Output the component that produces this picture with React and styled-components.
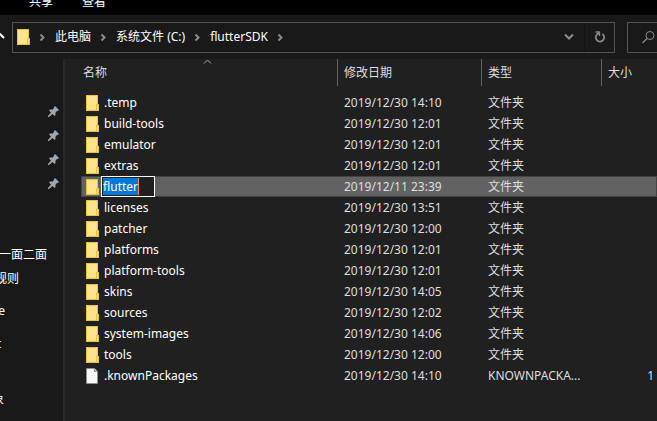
import React, { useEffect, useRef } from "react";
import styled, { createGlobalStyle } from "styled-components";

const Global = createGlobalStyle`
  * { box-sizing: border-box; }
  html, body { margin: 0; background: #202020; }
  body, button, input { font: 12px/16px "Noto Sans", "Noto Sans CJK SC", sans-serif; color: #fff; }
  button { background: none; border: 0; padding: 0; }
`;

const Window = styled.div`
  display: flex;
  flex-direction: column;
  min-height: 100vh;
  overflow: hidden;
`;
const Tabs = styled.nav`
  display: flex;
  align-items: flex-end;
  gap: 29px;
  height: 15px;
  padding: 0 0 5px 29px;
  background: #000;
  overflow: hidden;
`;
const Tab = styled.button`
  flex: none;
  white-space: nowrap;
`;
const Toolbar = styled.div`
  display: flex;
  align-items: center;
  height: 44px;
  background: #191919;
`;
const UpButton = styled.button`
  display: flex;
  width: 12px;
  flex: none;
`;
const AddressBar = styled.div`
  display: flex;
  align-items: center;
  flex: 1;
  min-width: 0;
  height: 31px;
  border: 1px solid #535353;
  padding-left: 4px;
`;
const Crumbs = styled.div`
  display: flex;
  align-items: center;
  flex: 1;
`;
const Crumb = styled.button`
  white-space: nowrap;
`;
const CrumbArrow = styled.svg`
  width: 25px;
  height: 11px;
  flex: none;
  fill: none;
  stroke: #8b8b8b;
  stroke-width: 2;
`;
const BarButton = styled.button`
  display: grid;
  place-items: center;
  width: 30px;
  height: 29px;
  border-left: ${(p) => (p.$divided ? "1px solid #141414" : "0")};
`;
const SearchBox = styled.button`
  display: flex;
  align-items: center;
  width: 30px;
  height: 31px;
  margin-left: 12px;
  padding-left: 14px;
  border: 1px solid #535353;
  border-right: 0;
`;
const Body = styled.div`
  display: flex;
  flex: 1;
`;
const Sidebar = styled.aside`
  display: flex;
  flex-direction: column;
  flex: none;
  width: 65px;
  padding-top: 40px;
  background: #191919;
  border-right: 2px solid #2a2a2a;
  overflow: hidden;
`;
const PinItem = styled.button`
  display: flex;
  align-items: center;
  justify-content: flex-end;
  height: 24px;
  padding-right: 4px;
`;
const TreeItem = styled.button`
  display: flex;
  align-items: center;
  justify-content: flex-end;
  height: 24px;
  margin-top: ${(p) => p.$gap}px;
  padding-right: ${(p) => p.$end}px;
  white-space: nowrap;
`;
const FileTable = styled.table`
  display: block;
  flex: 1;
  min-width: 0;
`;
const TableHead = styled.thead`
  display: block;
`;
const TableBody = styled.tbody`
  display: block;
  padding: 6px 0 0 16px;
`;
const HeadRow = styled.tr`
  display: grid;
  grid-template-columns: 273px 144px 120px minmax(0, 1fr);
  height: 27px;
`;
const HeadCell = styled.th`
  position: relative;
  display: flex;
  align-items: center;
  padding: 0 0 0 ${(p) => (p.$first ? 18 : 6)}px;
  border-right: ${(p) => (p.$last ? "0" : "1px solid #636363")};
  color: #dedede;
  font-weight: 400;
`;
const SortMark = styled.svg`
  position: absolute;
  top: 0;
  left: 138px;
  width: 9px;
  height: 5px;
  fill: none;
  stroke: #a8a8a8;
`;
const Row = styled.tr`
  display: grid;
  grid-template-columns: 257px 144px 120px minmax(0, 1fr);
  align-items: center;
  height: 21px;
  background: ${(p) => (p.$selected ? "#626262" : "transparent")};
  box-shadow: ${(p) => (p.$selected ? "inset 0 0 0 1px #434343" : "none")};
`;
const NameCell = styled.td`
  display: flex;
  align-items: center;
  gap: ${(p) => (p.$editing ? 2 : 5)}px;
  padding: 0 0 0 5px;
  white-space: nowrap;
`;
const InfoCell = styled.td`
  padding: 0 14px 0 6px;
  color: #dedede;
  white-space: nowrap;
`;
const SizeCell = styled(InfoCell)`
  padding: 0 3px 0 0;
  text-align: right;
`;
const RenameBox = styled.span`
  display: flex;
  align-items: center;
  width: 54px;
  height: 21px;
  padding-left: 1px;
  border: 1px solid #fff;
  background: #202020;
`;
const RenameInput = styled.input`
  field-sizing: content;
  height: 17px;
  padding: 0;
  border: 0;
  outline: 0;
  background: #0078d7;
  &::selection { background: #0078d7; color: #fff; }
`;
const Caret = styled.span`
  width: 1px;
  height: 17px;
  background: #ff8728;
`;
const Icon = styled.svg`
  display: block;
  flex: none;
`;

const FolderIcon = () => (
  <Icon width="13" height="16" viewBox="0 0 13 16">
    <path d="M0 0h12v9h1v7H0z" fill="#e9c13f" />
    <path d="M1 1h10v8h-1v6H1z" fill="#ffe48a" />
    <path d="M11 10h1v5h-1z" fill="#ffe17a" />
  </Icon>
);
const FileIcon = () => (
  <Icon width="13" height="16" viewBox="0 0 13 16">
    <path d="M.5.5h8l3 3v12H.5z" fill="#f7f8f9" stroke="#8d8d8d" />
    <path d="M8.500.5v3h3" fill="#d5d5d5" stroke="#8d8d8d" />
  </Icon>
);
const PinIcon = () => (
  <Icon width="11" height="11" viewBox="0 0 11 11">
    <path d="M7 0l4 4-1 1H9L7.500 6.500V9L6.500 10 4.500 8 1 11H0V10L3 6.500 1 4.500 2 3.500h2.500L6 2V1z" fill="#9ba6ae" />
  </Icon>
);
const Arrow = () => (
  <CrumbArrow viewBox="0 0 25 11">
    <path d="M10.500 2.500l3 3-3 3" />
  </CrumbArrow>
);

const crumbs = ["此电脑", "系统文件 (C:)", "flutterSDK"];
const tree = [
  { text: "一面二面", gap: 48, end: 16 },
  { text: "规则", gap: 0, end: 44 },
  { text: "e", gap: 8, end: 58 },
  { text: "t", gap: 9, end: 62 },
  { text: "象", gap: 32, end: 59 },
];
const files = [
  [".temp", "2019/12/30 14:10"],
  ["build-tools", "2019/12/30 12:01"],
  ["emulator", "2019/12/30 12:01"],
  ["extras", "2019/12/30 12:01"],
  ["flutter", "2019/12/11 23:39"],
  ["licenses", "2019/12/30 13:51"],
  ["patcher", "2019/12/30 12:00"],
  ["platforms", "2019/12/30 12:01"],
  ["platform-tools", "2019/12/30 12:01"],
  ["skins", "2019/12/30 14:05"],
  ["sources", "2019/12/30 12:02"],
  ["system-images", "2019/12/30 14:06"],
  ["tools", "2019/12/30 12:00"],
  [".knownPackages", "2019/12/30 14:10", "KNOWNPACKA...", "1"],
];

function RenameField({ name }) {
  const ref = useRef(null);
  useEffect(() => {
    ref.current.focus();
    ref.current.select();
  }, []);
  return (
    <RenameBox>
      <RenameInput ref={ref} defaultValue={name} aria-label="重命名" />
      <Caret />
    </RenameBox>
  );
}

export default function App() {
  return (
    <Window>
      <Global />
      <Tabs>
        <Tab>共享</Tab>
        <Tab>查看</Tab>
      </Tabs>
      <Toolbar>
        <UpButton aria-label="向上">
          <Icon width="6" height="10" viewBox="0 0 6 10">
            <path d="M-1 1L4 6" fill="none" stroke="#fff" strokeWidth="2" />
          </Icon>
        </UpButton>
        <AddressBar>
          <FolderIcon />
          <Crumbs>
            <Arrow />
            {crumbs.map((c) => (
              <React.Fragment key={c}>
                <Crumb>{c}</Crumb>
                <Arrow />
              </React.Fragment>
            ))}
          </Crumbs>
          <BarButton aria-label="历史">
            <Icon width="10" height="8" viewBox="0 0 10 8">
              <path d="M1 1.500l4 4 4-4" fill="none" stroke="#8b8b8b" strokeWidth="2" />
            </Icon>
          </BarButton>
          <BarButton $divided aria-label="刷新">
            <Icon width="12" height="12" viewBox="0 0 12 12">
              <path d="M8.500 3A4.200 4.200 0 1 1 3.200 3.200L5 2" fill="none" stroke="#8b8b8b" strokeWidth="1.700" />
              <path d="M1.500 1h4v4" fill="none" stroke="#8b8b8b" strokeWidth="1.300" />
            </Icon>
          </BarButton>
        </AddressBar>
        <SearchBox aria-label="搜索">
          <Icon width="13" height="13" viewBox="0 0 13 13">
            <circle cx="8" cy="4.500" r="4" fill="none" stroke="#8b8b8b" />
            <path d="M5 7.500L.5 12" stroke="#8b8b8b" strokeWidth="1.300" />
          </Icon>
        </SearchBox>
      </Toolbar>
      <Body>
        <Sidebar>
          {[1, 2, 3, 4].map((n) => (
            <PinItem key={n} aria-label="已固定">
              <PinIcon />
            </PinItem>
          ))}
          {tree.map((t) => (
            <TreeItem key={t.text} $gap={t.gap} $end={t.end}>{t.text}</TreeItem>
          ))}
        </Sidebar>
        <FileTable>
          <TableHead>
            <HeadRow>
              <HeadCell $first>
                名称
                <SortMark viewBox="0 0 9 5"><path d="M1 4.500l3.500-3.500 3.500 3.500" /></SortMark>
              </HeadCell>
              <HeadCell>修改日期</HeadCell>
              <HeadCell>类型</HeadCell>
              <HeadCell $last>大小</HeadCell>
            </HeadRow>
          </TableHead>
          <TableBody>
            {files.map(([name, date, type = "文件夹", size]) => {
              const editing = name === "flutter";
              return (
                <Row key={name} $selected={editing}>
                  <NameCell $editing={editing}>
                    {size ? <FileIcon /> : <FolderIcon />}
                    {editing ? <RenameField name={name} /> : name}
                  </NameCell>
                  <InfoCell>{date}</InfoCell>
                  <InfoCell>{type}</InfoCell>
                  <SizeCell>{size}</SizeCell>
                </Row>
              );
            })}
          </TableBody>
        </FileTable>
      </Body>
    </Window>
  );
}
